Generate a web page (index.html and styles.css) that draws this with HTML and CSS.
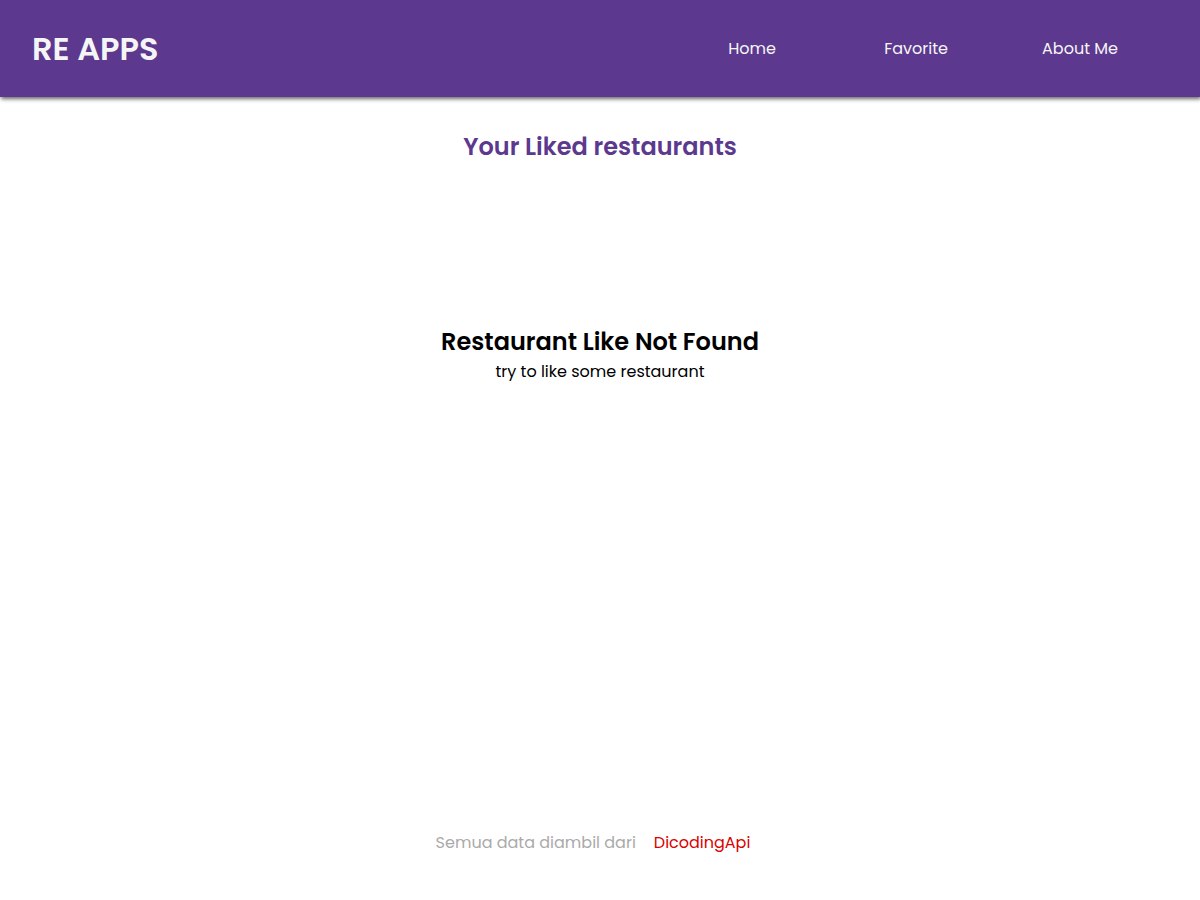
FILE: index.html
```html
<!DOCTYPE html>
<html lang="en">
<head>
<meta charset="utf-8">
<meta name="viewport" content="width=device-width, initial-scale=1">
<title>RE APPS</title>
<link rel="stylesheet" href="styles.css">
</head>
<body>
<header class="app-bar">
  <h1 class="brand">RE APPS</h1>
  <nav class="nav">
    <ul class="nav-list">
      <li><a href="#home">Home</a></li>
      <li><a href="#favorite">Favorite</a></li>
      <li><a href="#about">About Me</a></li>
    </ul>
  </nav>
</header>
<main class="content">
  <h2 class="title">Your Liked restaurants</h2>
  <section class="empty">
    <h2 class="empty-title">Restaurant Like Not Found</h2>
    <p class="empty-text">try to like some restaurant</p>
  </section>
</main>
<footer class="footer">
  <p>Semua data diambil dari</p>
  <a href="#api">DicodingApi</a>
</footer>
</body>
</html>
```
FILE: styles.css
```css
* {
  box-sizing: border-box;
  margin: 0;
  padding: 0;
}

body {
  min-height: 100vh;
  display: flex;
  flex-direction: column;
  background: #fff;
  color: #000;
  font-family: Poppins, Inter, "Open Sans", sans-serif;
  font-size: 16px;
  font-weight: 400;
  line-height: 24px;
}

a {
  text-decoration: none;
}

.app-bar {
  display: flex;
  align-items: center;
  justify-content: space-between;
  padding: 24px 38px 24px 32px;
  background: #5c388e;
  box-shadow: 1px 2px 4px rgba(0, 0, 0, 0.6);
}

.brand {
  color: #f5f5f5;
  font-size: 32px;
  font-weight: 600;
  line-height: 49px;
}

.nav {
  width: 41vw;
}

.nav-list {
  display: grid;
  grid-template-columns: repeat(3, 1fr);
  list-style: none;
  text-align: center;
}

.nav-list a {
  color: #f5f5f5;
}

.content {
  flex: 1;
  padding: 32px;
  text-align: center;
}

.title {
  color: #5c388e;
  font-size: 24px;
  font-weight: 600;
  line-height: 36px;
}

.empty {
  margin-top: 159px;
}

.empty-title {
  font-size: 24px;
  font-weight: 600;
  line-height: 36px;
}

.footer {
  display: flex;
  justify-content: center;
  gap: 18px;
  padding: 0 30px 45px 16px;
  color: #aaa;
}

.footer a {
  color: #dc0000;
}
```
